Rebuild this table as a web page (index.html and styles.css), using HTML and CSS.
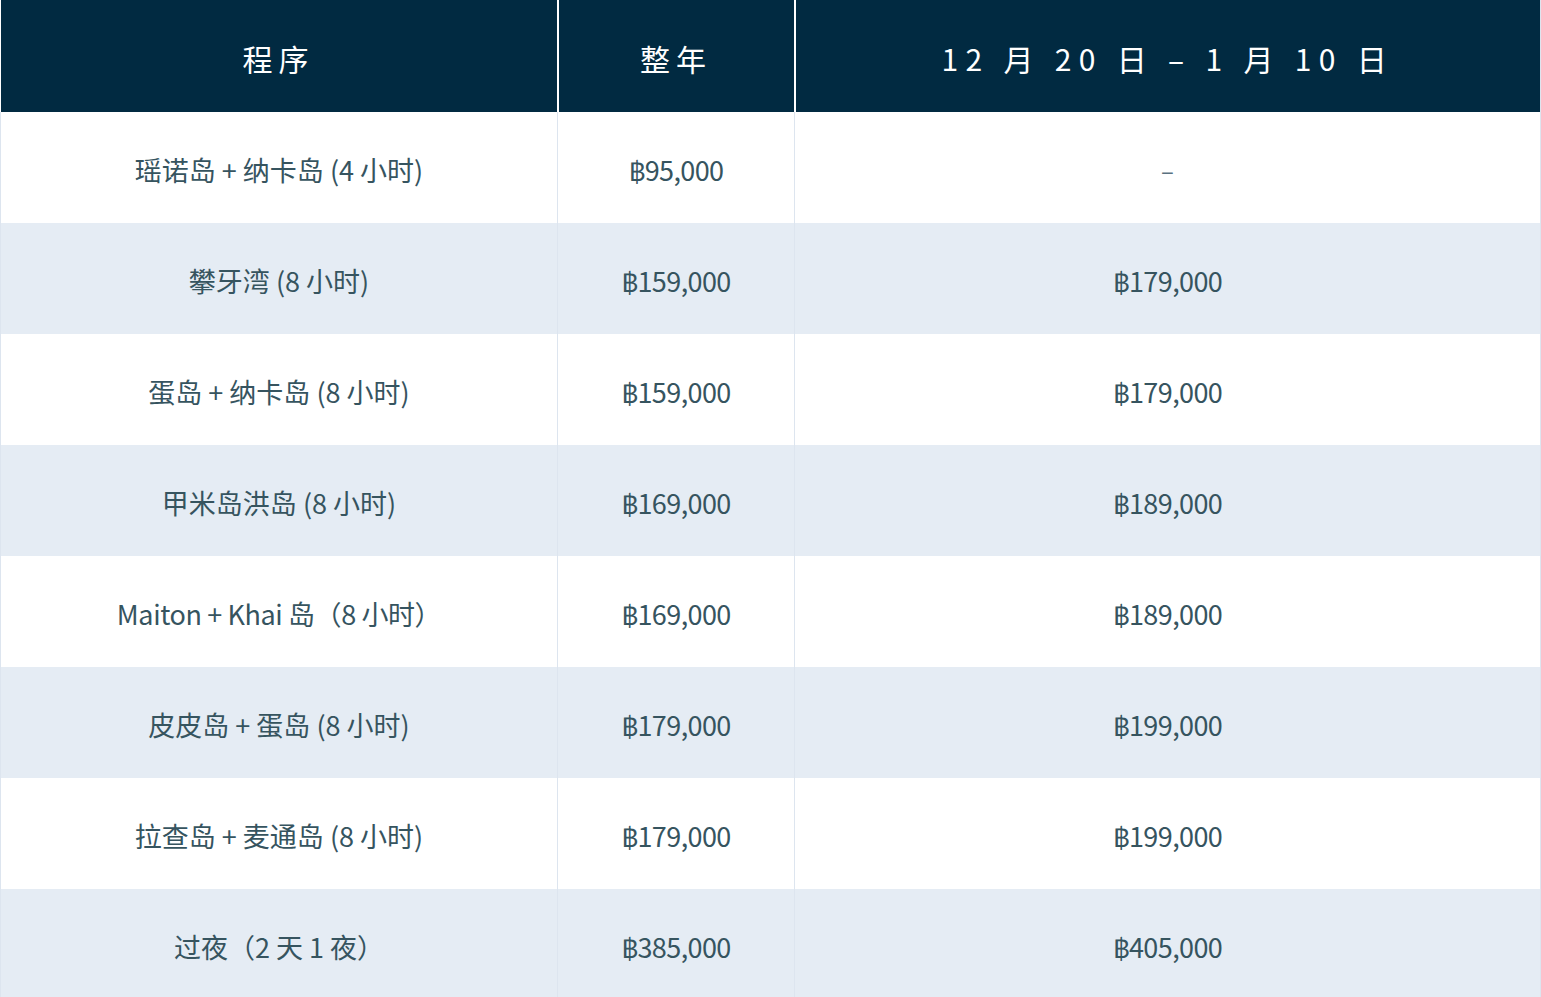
FILE: index.html
```html
<!DOCTYPE html>
<html lang="zh">
<head>
<meta charset="utf-8">
<link rel="stylesheet" href="styles.css">
</head>
<body>
<div class="wrap">
<table class="price">
  <colgroup>
    <col class="c1"><col class="c2"><col class="c3">
  </colgroup>
  <thead>
    <tr>
      <th>程序</th>
      <th>整年</th>
      <th class="date">12 月 20 日 – 1 月 10 日</th>
    </tr>
  </thead>
  <tbody>
    <tr><td>瑶诺岛 + 纳卡岛 (4 小时)</td><td class="amt"><span class="baht">฿</span>95,000</td><td class="na">–</td></tr>
    <tr><td>攀牙湾 (8 小时)</td><td class="amt"><span class="baht">฿</span>159,000</td><td class="amt"><span class="baht">฿</span>179,000</td></tr>
    <tr><td>蛋岛 + 纳卡岛 (8 小时)</td><td class="amt"><span class="baht">฿</span>159,000</td><td class="amt"><span class="baht">฿</span>179,000</td></tr>
    <tr><td>甲米岛洪岛 (8 小时)</td><td class="amt"><span class="baht">฿</span>169,000</td><td class="amt"><span class="baht">฿</span>189,000</td></tr>
    <tr><td class="latin">Maiton + Khai 岛（8 小时）</td><td class="amt"><span class="baht">฿</span>169,000</td><td class="amt"><span class="baht">฿</span>189,000</td></tr>
    <tr><td>皮皮岛 + 蛋岛 (8 小时)</td><td class="amt"><span class="baht">฿</span>179,000</td><td class="amt"><span class="baht">฿</span>199,000</td></tr>
    <tr><td>拉查岛 + 麦通岛 (8 小时)</td><td class="amt"><span class="baht">฿</span>179,000</td><td class="amt"><span class="baht">฿</span>199,000</td></tr>
    <tr><td>过夜（2 天 1 夜）</td><td class="amt"><span class="baht">฿</span>385,000</td><td class="amt"><span class="baht">฿</span>405,000</td></tr>
  </tbody>
</table>
</div>
</body>
</html>
```

FILE: styles.css
```css
html, body {
  margin: 0;
  padding: 0;
  background: #ffffff;
}

.wrap {
  width: 1541px;
  overflow: hidden;
}

.price {
  width: 1541px;
  border-collapse: collapse;
  table-layout: fixed;
  font-family: "Noto Sans CJK SC", "Noto Sans", sans-serif;
  border-right: 3px solid #dde5ef;
}

.c1 { width: 557px; }
.c2 { width: 237px; }
.c3 { width: 747px; }

.price th {
  background: #012a41;
  color: #ffffff;
  font-weight: 400;
  font-size: 30px;
  letter-spacing: 6px;
  height: 112px;
  padding: 4px 0 0;
  text-align: center;
  vertical-align: middle;
  border-right: 2px solid #ffffff;
  box-sizing: border-box;
}

.price th.date {
  letter-spacing: 7.3px;
}

.price td {
  height: 111px;
  padding: 3px 0 0;
  text-align: center;
  vertical-align: middle;
  font-size: 27px;
  font-weight: 400;
  color: #36545f;
  border-left: 1px solid #dde5ef;
  border-right: 1px solid #dde5ef;
  box-sizing: border-box;
}

.price td.latin {
  letter-spacing: -0.4px;
}

.price td.amt {
  letter-spacing: -0.6px;
}

.baht {
  font-family: Roboto, "Liberation Sans", "Open Sans", Lato, sans-serif;
  font-weight: 400;
  font-size: 26px;
  letter-spacing: -1px;
}

.price tbody tr:nth-child(even) td {
  background: #e5ecf4;
}

.price td.na {
  color: #5a7180;
  font-size: 24px;
}
```
